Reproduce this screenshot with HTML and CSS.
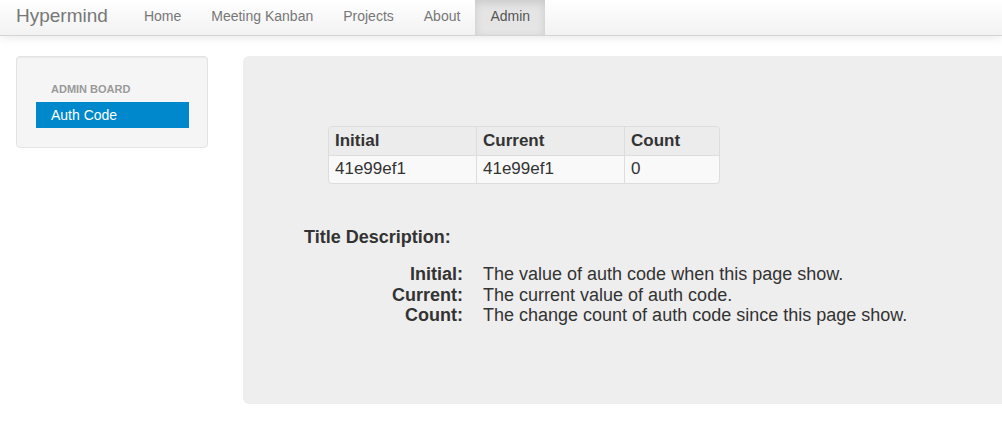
FILE: index.html
```html
<!DOCTYPE html>
<html>
<head>
<meta charset="utf-8">
<title>Hypermind - Admin</title>
<link rel="stylesheet" href="styles.css">
</head>
<body>
<div class="navbar">
  <a class="brand" href="#">Hypermind</a>
  <ul class="nav">
    <li><a href="#">Home</a></li>
    <li><a href="#">Meeting Kanban</a></li>
    <li><a href="#">Projects</a></li>
    <li><a href="#">About</a></li>
    <li class="active"><a href="#">Admin</a></li>
  </ul>
</div>
<div class="page">
  <div class="well">
    <ul class="nav-list">
      <li class="nav-header">Admin Board</li>
      <li class="active"><a href="#">Auth Code</a></li>
    </ul>
  </div>
  <div class="hero">
    <table class="codes">
      <thead>
        <tr><th class="c1">Initial</th><th class="c2">Current</th><th class="c3">Count</th></tr>
      </thead>
      <tbody>
        <tr><td>41e99ef1</td><td>41e99ef1</td><td>0</td></tr>
      </tbody>
    </table>
    <div class="title">Title Description:</div>
    <dl class="desc">
      <dt>Initial:</dt><dd>The value of auth code when this page show.</dd>
      <dt>Current:</dt><dd>The current value of auth code.</dd>
      <dt>Count:</dt><dd>The change count of auth code since this page show.</dd>
    </dl>
  </div>
</div>
</body>
</html>
```
FILE: styles.css
```css
html, body {
  margin: 0;
  padding: 0;
  overflow: hidden;
}
body {
  font-family: "Liberation Sans", Arial, Helvetica, sans-serif;
  font-size: 14px;
  line-height: 20px;
  color: #333;
  background: #fff;
}
a { text-decoration: none; }

.navbar {
  display: flex;
  align-items: flex-start;
  height: 35px;
  border-bottom: 1px solid #d4d4d4;
  background: linear-gradient(to bottom, #ffffff, #f2f2f2);
  box-shadow: 0 1px 10px rgba(0, 0, 0, 0.1);
  padding-left: 16px;
}
.brand {
  font-size: 19px;
  line-height: 20px;
  color: #777;
  padding: 6px 21px 9px 0;
}
.nav {
  display: flex;
  list-style: none;
  margin: 0;
  padding: 0;
}
.nav a {
  display: block;
  color: #777;
  font-size: 14px;
  line-height: 20px;
  padding: 6px 15px 9px;
}
.nav .active a {
  background: #e5e5e5;
  color: #555;
  box-shadow: inset 0 3px 8px rgba(0, 0, 0, 0.125);
}

.page {
  display: flex;
  align-items: flex-start;
  padding: 20px 0 0 16px;
  gap: 35px;
}
.well {
  flex: none;
  width: 153px;
  padding: 19px 18px 19px 19px;
  background: #f5f5f5;
  border: 1px solid #e3e3e3;
  border-radius: 4px;
  box-shadow: inset 0 1px 1px rgba(0, 0, 0, 0.05);
}
.nav-list {
  list-style: none;
  margin: 0;
  padding: 0;
}
.nav-header {
  padding: 3px 15px;
  font-size: 11px;
  font-weight: bold;
  line-height: 20px;
  color: #999;
  text-transform: uppercase;
  text-shadow: 0 1px 0 rgba(255, 255, 255, 0.5);
}
.nav-list .active a {
  display: block;
  padding: 3px 15px;
  background: #0088cc;
  color: #fff;
  font-size: 14px;
}

.hero {
  flex: none;
  width: 800px;
  padding: 60px;
  background: #eeeeee;
  border-radius: 6px;
  font-size: 18px;
}
.codes {
  margin: 10px 0 0 25px;
  border-collapse: separate;
  border-spacing: 0;
  border: 1px solid #dddddd;
  border-radius: 4px;
  width: 392px;
  font-size: 17px;
}
.codes th, .codes td {
  text-align: left;
  padding: 4px 6px;
  line-height: 20px;
  border-left: 1px solid #dddddd;
}
.codes th:first-child, .codes td:first-child { border-left: 0; }
.codes th {
  font-weight: bold;
  background: #ececec;
}
.codes td {
  border-top: 1px solid #dddddd;
  background: #f9f9f9;
  padding-top: 3px;
}
.codes .c1 { width: 135px; }
.codes .c2 { width: 135px; }
.codes thead tr th:first-child { border-top-left-radius: 4px; }
.codes thead tr th:last-child { border-top-right-radius: 4px; }
.codes tbody tr td:first-child { border-bottom-left-radius: 4px; }
.codes tbody tr td:last-child { border-bottom-right-radius: 4px; }

.title {
  margin-top: 43px;
  font-weight: bold;
  line-height: 20px;
  padding-left: 1px;
}
.desc {
  display: grid;
  grid-template-columns: 160px 1fr;
  column-gap: 20px;
  margin: 17px 0 18px;
  line-height: 20.5px;
}
.desc dt {
  font-weight: bold;
  text-align: right;
}
.desc dd {
  margin: 0;
}
```
